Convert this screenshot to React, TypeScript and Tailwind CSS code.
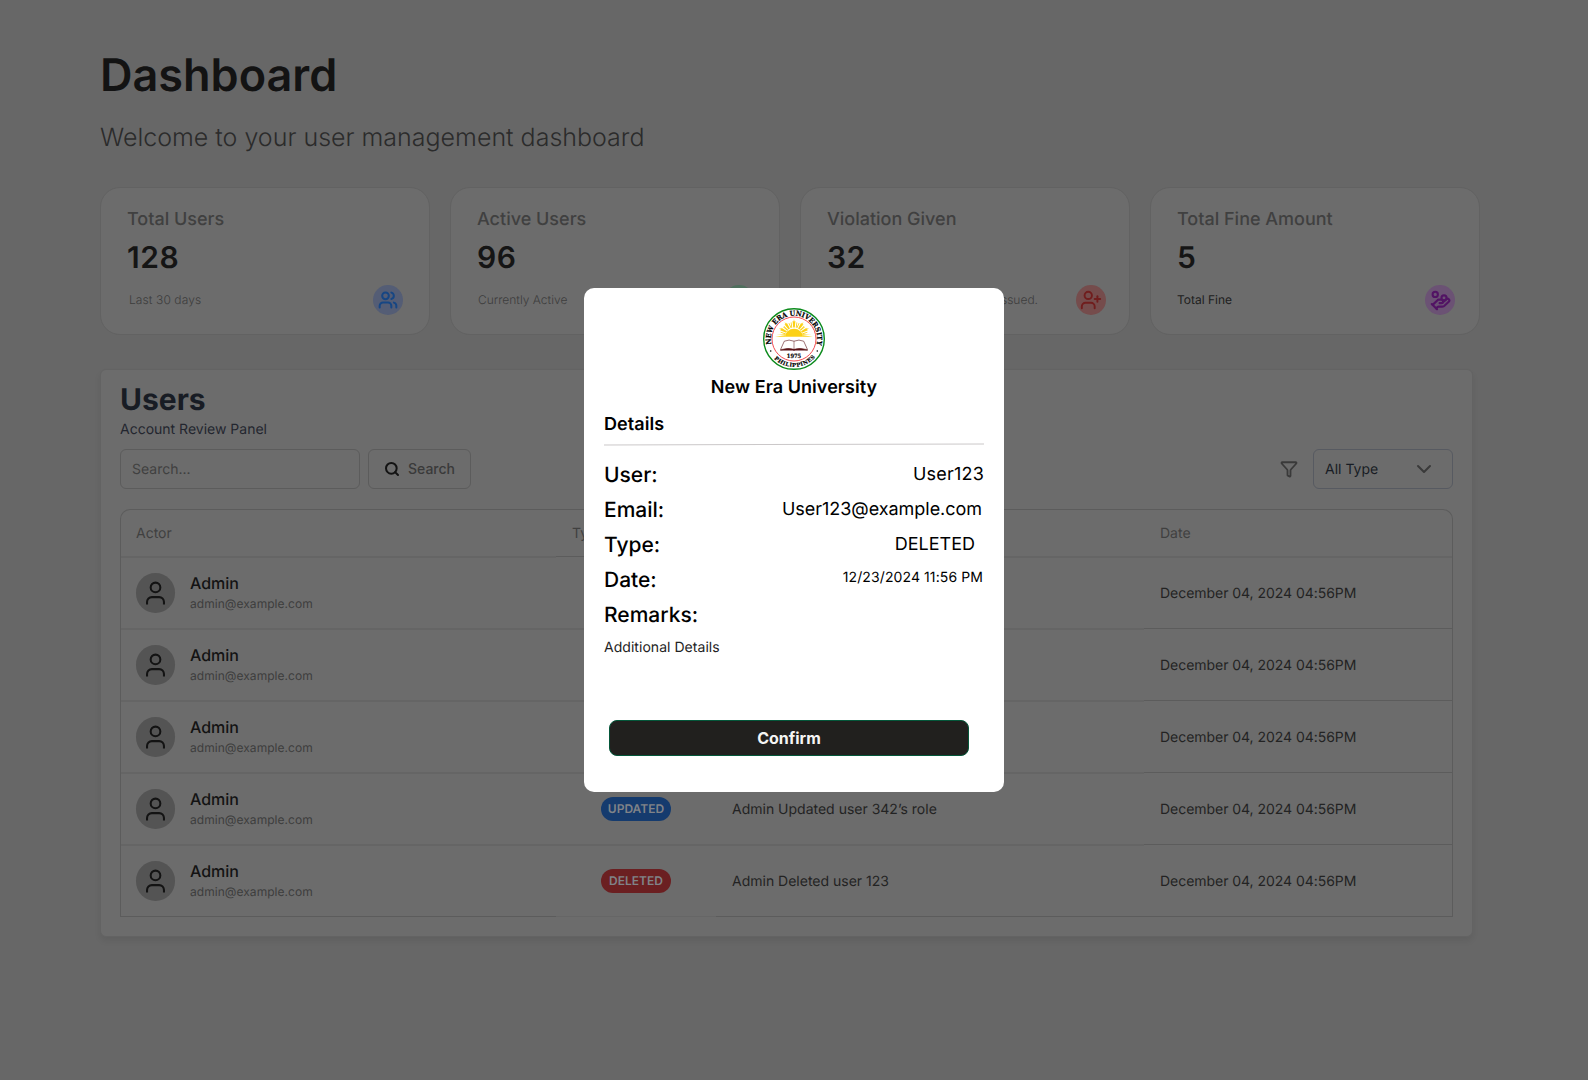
import { ChevronDown, Filter, HandCoins, Search, User, UserCheck, UserPlus, Users } from "lucide-react";
import type { ReactNode } from "react";

type Stat = {
  label: string;
  value: string;
  note: string;
  noteClass: string;
  rowClass: string;
  badgeClass: string;
  icon: ReactNode;
};

const stats: Stat[] = [
  {
    label: "Total Users",
    value: "128",
    note: "Last 30 days",
    noteClass: "pl-[2px] font-light tracking-[0.1px] text-[#3d3d3d]",
    rowClass: "pr-[26px]",
    badgeClass: "bg-[#545d75] text-[#164684]",
    icon: <Users size={20} strokeWidth={2.4} />,
  },
  {
    label: "Active Users",
    value: "96",
    note: "Currently Active",
    noteClass: "pl-px font-light text-[#3d3d3d]",
    rowClass: "pr-[25px]",
    badgeClass: "bg-[#4f6f5d] text-[#14592f]",
    icon: <UserCheck size={20} strokeWidth={2.4} />,
  },
  {
    label: "Violation Given",
    value: "32",
    note: "Total number of violations issued.",
    noteClass: "w-[211px] text-right font-light text-[#3d3d3d]",
    rowClass: "pr-[23px]",
    badgeClass: "bg-[#754c4c] text-[#701d1d]",
    icon: <UserPlus size={22} strokeWidth={2.1} />,
  },
  {
    label: "Total Fine Amount",
    value: "5",
    note: "Total Fine",
    noteClass: "text-[#202020]",
    rowClass: "pr-[24px]",
    badgeClass: "bg-[#6b5274] text-[#521364]",
    icon: <HandCoins size={21} strokeWidth={2.4} />,
  },
];

type Entry = { type: string; remark: string; badge: string };

const entries: Entry[] = [
  { type: "CREATED", remark: "Admin Created user 120", badge: "bg-[#155a34]" },
  { type: "UPDATED", remark: "Admin Updated user 342’s role", badge: "bg-[#153b6e]" },
  { type: "DELETED", remark: "Admin Deleted user 123", badge: "bg-[#6b1f21]" },
  { type: "UPDATED", remark: "Admin Updated user 342’s role", badge: "bg-[#153b6e]" },
  { type: "DELETED", remark: "Admin Deleted user 123", badge: "bg-[#6b1f21]" },
];

function StatCard({ stat }: { stat: Stat }) {
  return (
    <div className="h-[148px] w-[330px] rounded-[20px] border border-[#626262] bg-[#6c6c6c] pt-[18px] pl-[26px]">
      <div className="text-[18px] leading-7 font-medium text-[#404040]">{stat.label}</div>
      <div className="mt-[6px] text-[30px] leading-9 font-semibold tracking-[0.5px] text-[#151515]">{stat.value}</div>
      <div className={`mt-[9px] flex items-center justify-between ${stat.rowClass}`}>
        <span className={`text-[12px] leading-4 whitespace-nowrap ${stat.noteClass}`}>{stat.note}</span>
        <span className={`flex size-[30px] items-center justify-center rounded-full ${stat.badgeClass}`}>{stat.icon}</span>
      </div>
    </div>
  );
}

function EntryRow({ entry, last }: { entry: Entry; last: boolean }) {
  const soft = last ? "border-b border-[#5c5c5c]" : "border-b-2 border-[#656565]";
  return (
    <div className={`grid grid-cols-[435px_160px_428px_1fr] ${last ? "h-[71px]" : "h-[72px]"}`}>
      <div className={`flex items-center pl-[15px] ${soft}`}>
        <span className="flex h-10 w-[39px] items-center justify-center rounded-full bg-[#545454] text-[#131313]">
          <User size={29} strokeWidth={1.7} strokeLinecap="butt" />
        </span>
        <span className="ml-[15px] flex flex-col gap-[2px] pb-px">
          <span className="text-[16px] leading-[20px] font-medium text-[#131313]">Admin</span>
          <span className="text-[12px] leading-[18px] tracking-[0.05px] text-[#3d3d3d]">admin@example.com</span>
        </span>
      </div>
      <div className={`flex items-center pl-[45px] ${last ? "border-b border-[#666666]" : soft}`}>
        <span className={`flex h-6 w-[70px] items-center justify-center rounded-full text-[12px] font-semibold text-[#808388] ${entry.badge}`}>
          {entry.type}
        </span>
      </div>
      <div className={`flex items-center pt-px pl-[16px] text-[14px] text-[#232323] ${soft}`}>{entry.remark}</div>
      <div className={last ? "" : "pb-px"}>
        <div className="flex h-full items-center border-b border-[#5c5c5c] pt-px pl-[16px] text-[14px] tracking-[-0.04px] text-[#232323]">
          December 04, 2024 04:56PM
        </div>
      </div>
    </div>
  );
}

function Seal() {
  const rays = [-62, -34, 0, 34, 62];
  return (
    <svg viewBox="0 0 62 62" className="size-[62px]" aria-label="New Era University seal">
      <defs>
        <path id="sealTop" d="M 10.3 41.4 A 23.2 23.2 0 1 1 51.7 41.4" />
        <path id="sealBottom" d="M 8.2 47.2 A 28 28 0 0 0 53.8 47.2" />
      </defs>
      <circle cx="31" cy="31" r="30.3" fill="#fff" stroke="#0b8a1b" strokeWidth="1.4" />
      <circle cx="31" cy="31" r="22" fill="#fff" stroke="#f0373d" strokeWidth="0.9" />
      <g fill="#fcd116">
        {rays.map((angle) => (
          <g key={angle} transform={`rotate(${angle} 31 28)`}>
            <path d="M30.2 19.5 L29.6 13 L30.5 13.5 L31 11 L31.5 13.5 L32.4 13 L31.8 19.5 Z" />
            <path d="M28.4 19.8 L27.7 14.5 L28.4 14.3 L29.3 19.6 Z M33.6 19.8 L34.3 14.5 L33.6 14.3 L32.7 19.6 Z" />
          </g>
        ))}
        <path d="M22 28.8 A 9 8 0 0 1 40 28.8 Z" />
        <path d="M12 28.8 L22 27.2 L22 28.8 Z M50 28.8 L40 27.2 L40 28.8 Z M13.5 26.6 L22.4 26 L22.2 26.8 Z M48.5 26.6 L39.6 26 L39.8 26.8 Z" />
      </g>
      <path d="M17.5 41.6 L21.3 33.2 Q26 31 31 33.2 Q36 31 40.7 33.2 L44.5 41.6 Q37 39.6 31 41.6 Q25 39.6 17.5 41.6 Z" fill="#fff" stroke="#5a1418" strokeWidth="0.6" />
      <path d="M17.3 42.2 Q25 39.4 31 41.3 Q37 39.4 44.7 42.2 L32 42.2 L31 42.8 L30 42.2 Z" fill="#5a1418" stroke="#5a1418" strokeWidth="0.5" />
      <path d="M31 33.2 V41.4" stroke="#5a1418" strokeWidth="0.5" />
      <text x="31" y="49.5" textAnchor="middle" textLength="14.4" lengthAdjust="spacingAndGlyphs" className="fill-black stroke-black stroke-[0.2] font-['DejaVu_Serif',serif] text-[5.8px] font-bold">
        1975
      </text>
      <text className="fill-black stroke-black stroke-[0.2] font-['DejaVu_Serif',serif] text-[7px] font-bold">
        <textPath href="#sealTop" startOffset="5.5" textLength="84" lengthAdjust="spacingAndGlyphs">
          NEW ERA UNIVERSITY
        </textPath>
      </text>
      <text className="fill-black stroke-black stroke-[0.15] font-['DejaVu_Serif',serif] text-[5.4px] font-bold">
        <textPath href="#sealBottom" startOffset="4.5" textLength="46" lengthAdjust="spacing">
          PHILIPPINES
        </textPath>
      </text>
      <circle cx="7.7" cy="43" r="0.8" />
      <circle cx="54.3" cy="43" r="0.8" />
    </svg>
  );
}

function DetailRow({ label, children }: { label: string; children?: ReactNode }) {
  return (
    <div className="flex h-[35px] items-center justify-between">
      <span className="text-[21px] leading-[35px] font-medium">{label}</span>
      {children}
    </div>
  );
}

function DetailsDialog() {
  return (
    <div className="absolute top-[288px] left-[584px] flex h-[504px] w-[420px] flex-col rounded-[10px] bg-white px-5 pt-5 text-black">
      <div className="flex justify-center">
        <Seal />
      </div>
      <div className="mt-[6px] text-center text-[18px] leading-6 font-semibold tracking-[0.06px]">New Era University</div>
      <div className="mt-[13px] text-[18px] leading-6 font-semibold tracking-[0.06px]">Details</div>
      <div className="mt-[7px] h-px -rotate-[0.15deg] bg-[#cbc8c9]" />
      <div className="mt-[13px]">
        <DetailRow label="User:">
          <span className="pb-[2px] text-[18px] tracking-[0.2px]">User123</span>
        </DetailRow>
        <DetailRow label="Email:">
          <span className="pr-[2px] pb-[2px] text-[18px] tracking-[-0.03px]">User123@example.com</span>
        </DetailRow>
        <DetailRow label="Type:">
          <span className="pr-[9px] pb-[2px] text-[18px]">DELETED</span>
        </DetailRow>
        <DetailRow label="Date:">
          <span className="pr-px pb-[6px] text-[14px] tracking-[0.1px]">12/23/2024 11:56 PM</span>
        </DetailRow>
        <DetailRow label="Remarks:" />
      </div>
      <div className="mt-[5px] text-[14px] leading-5 tracking-[0.04px] text-[#232323]">Additional Details</div>
      <button className="mt-[62px] ml-[5px] h-9 w-[360px] shrink-0 rounded-lg border border-[#04573a] bg-[#21201e] text-[16px] font-bold text-[#f5f5f4]">
        Confirm
      </button>
    </div>
  );
}

export default function App() {
  return (
    <div className="relative h-[1080px] w-[1588px] overflow-hidden bg-[#676767] pt-[47px] pl-[100px] font-['Inter',sans-serif] [text-rendering:geometricPrecision]">
      <h1 className="text-[45px] leading-[56px] font-semibold text-[#131313]">Dashboard</h1>
      <p className="mt-[19px] text-[25px] leading-8 font-light text-[#2b2b2b]">Welcome to your user management dashboard</p>

      <div className="mt-[33px] flex gap-5">
        {stats.map((stat) => (
          <StatCard key={stat.label} stat={stat} />
        ))}
      </div>

      <section className="mt-[34px] w-[1373px] rounded-[6px] border border-[#636363] bg-[#6c6c6c] px-[19px] pt-[12px] pb-[19px] shadow-[0_4px_6px_rgba(0,0,0,0.07)]">
        <h2 className="text-[30px] leading-9 font-bold text-[#181c24]">Users</h2>
        <p className="mt-[2px] text-[14px] leading-5 text-[#23262f]">Account Review Panel</p>

        <div className="mt-[9px] flex h-10 items-center">
          <div className="flex h-10 w-[240px] items-center rounded-[6px] border border-[#5c5c5c] pl-[11px] text-[14px] text-[#404040]">Search...</div>
          <button className="ml-2 flex h-10 w-[103px] items-center rounded-[6px] border border-[#5c5c5c] pb-px pl-[15px] text-[14px] font-medium text-[#3a3a3a]">
            <Search size={16} strokeWidth={3} className="mr-2 text-[#131313]" />
            Search
          </button>
          <div className="grow" />
          <Filter size={18} strokeWidth={2.4} strokeLinejoin="miter" className="mr-[15px] text-[#3a3a3a]" />
          <div className="flex h-10 w-[140px] items-center justify-between rounded-[6px] border border-[#575a61] pr-[16px] pl-[11px] text-[14px] text-[#181c24]">
            All Type
            <ChevronDown size={24} strokeWidth={2} className="text-[#3a3a3a]" />
          </div>
        </div>

        <div className="mt-5 h-[408px] overflow-hidden rounded-t-[10px] border-x border-t border-[#5c5c5c]">
          <div className="grid h-[48px] grid-cols-[435px_160px_428px_1fr] text-[14px] text-[#404040]">
            <div className="flex items-center border-b-2 border-[#656565] pl-[15px]">Actor</div>
            <div className="pb-px">
              <div className="flex h-full items-center border-b border-[#5c5c5c] pl-[16px]">Type</div>
            </div>
            <div className="flex items-center border-b-2 border-[#656565] pl-[16px]">Remarks</div>
            <div className="flex items-center border-b-2 border-[#656565] pl-[16px]">Date</div>
          </div>
          {entries.map((entry, index) => (
            <EntryRow key={index} entry={entry} last={index === entries.length - 1} />
          ))}
        </div>
      </section>

      <DetailsDialog />
    </div>
  );
}
